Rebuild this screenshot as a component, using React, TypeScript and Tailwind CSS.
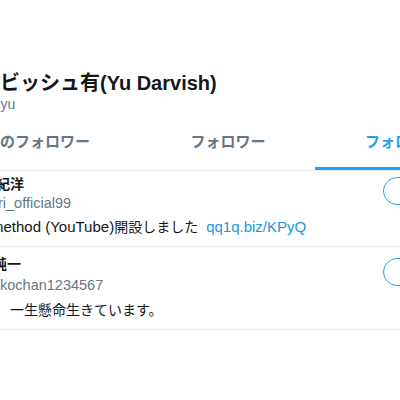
import React from 'react';

type Follow = {
  name: string;
  nameShift: string;
  handle: string;
  handleShift: string;
  bio: React.ReactNode;
  rowClass: string;
  handleGap: string;
  bioGap: string;
  buttonTop: string;
};

const follows: Follow[] = [
  {
    name: '紀洋',
    nameShift: '-ml-[4px]',
    handle: 'ri_official99',
    handleShift: '-ml-[2px]',
    bio: (
      <span className="-ml-[9px]">
        <span className="text-[15px]">method (YouTube)</span>開設しました
        <span className="ml-[8px] text-[15px] text-[#1b95e0]">qq1q.biz/KPyQ</span>
      </span>
    ),
    rowClass: 'pt-[3px] pb-[9px]',
    handleGap: 'mt-0',
    bioGap: 'mt-[5px]',
    buttonTop: 'mt-[3px]',
  },
  {
    name: '純一',
    nameShift: '-ml-[7px]',
    handle: 'kochan1234567',
    handleShift: 'ml-0',
    bio: <span className="ml-[10px]">一生懸命生きています。</span>,
    rowClass: 'pt-[7px] pb-[9px]',
    handleGap: 'mt-[2px]',
    bioGap: 'mt-[6px]',
    buttonTop: 'mt-[4px]',
  },
];

const tabs = ['知り合いのフォロワー', 'フォロワー', 'フォロー'];

const FollowRow: React.FC<{ item: Follow }> = ({ item }) => (
  <div className={`flex items-start border-b border-[#e6ecf0] ${item.rowClass}`}>
    <div className="flex-1 min-w-0">
      <div className={`h-[20px] leading-[20px] text-[14px] font-bold text-[#14171a] whitespace-nowrap ${item.nameShift}`}>
        {item.name}
      </div>
      <div className={`h-[18px] leading-[18px] text-[14.5px] text-[#657786] whitespace-nowrap ${item.handleGap} ${item.handleShift}`}>
        {item.handle}
      </div>
      <div className={`h-[20px] leading-[20px] text-[14px] text-[#14171a] whitespace-nowrap ${item.bioGap}`}>
        {item.bio}
      </div>
    </div>
    <div className={`shrink-0 -mr-[87px] ${item.buttonTop}`}>
      <button className="h-[28px] px-4 rounded-full border border-[#1da1f2] text-[14px] font-bold text-[#1da1f2] whitespace-nowrap bg-white">
        フォロー中
      </button>
    </div>
  </div>
);

const App: React.FC = () => {
  return (
    <div className="w-[400px] h-[400px] overflow-hidden bg-white font-['Liberation_Sans','Noto_Sans_CJK_JP',sans-serif]">
      <div className="pt-[71px]">
        <div className="h-[24px] leading-[24px] text-[20px] font-bold text-[#14171a] whitespace-nowrap -ml-[40px]">
          ダルビッシュ有(Yu Darvish)
        </div>
        <div className="h-[18px] leading-[18px] text-[14px] text-[#657786] whitespace-nowrap -ml-[41px]">
          @faridyu
        </div>
      </div>

      <div className="mt-[5px] border-b border-[#e6ecf0]">
        <div className="grid grid-cols-3 w-[522px] -ml-[33px]">
          {tabs.map((tab, i) => (
            <div
              key={tab}
              className={`h-[52px] flex items-center border-b-[3px] text-[15px] font-bold whitespace-nowrap ${
                i === 0
                  ? 'justify-end pr-[51px] border-transparent text-[#657786]'
                  : i === 1
                  ? 'justify-center border-transparent text-[#657786]'
                  : 'justify-start pl-[50px] border-[#1da1f2] text-[#1da1f2]'
              }`}
            >
              {tab}
            </div>
          ))}
        </div>
      </div>

      <div>
        {follows.map((f) => (
          <FollowRow key={f.handle} item={f} />
        ))}
      </div>
    </div>
  );
};

export default App;
